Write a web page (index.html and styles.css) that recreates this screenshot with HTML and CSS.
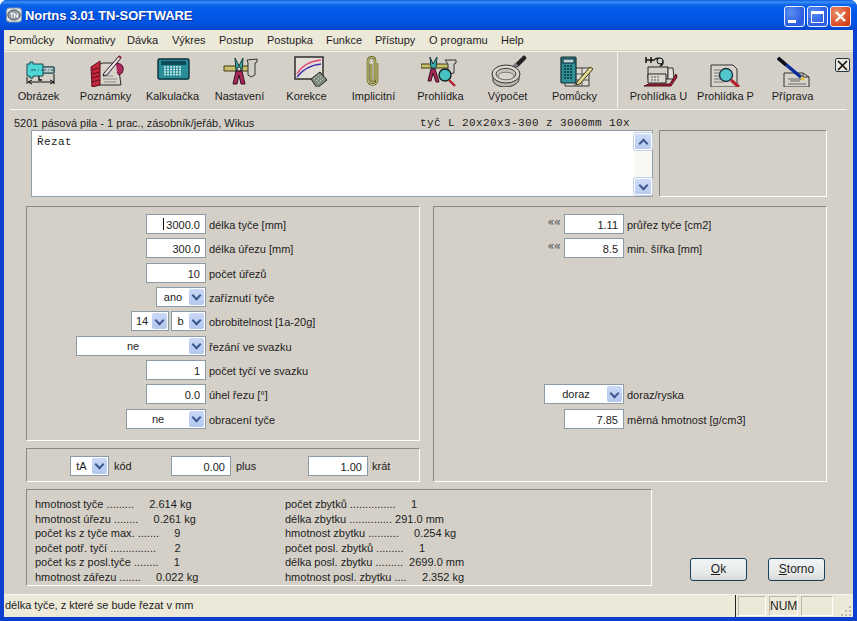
FILE: index.html
```html
<!DOCTYPE html>
<html lang="cs">
<head>
<meta charset="utf-8">
<title>Nortns 3.01 TN-SOFTWARE</title>
<link rel="stylesheet" href="styles.css">
</head>
<body>
<div class="window">
  <header class="titlebar">
    <svg class="app-icon" width="16" height="16" viewBox="0 0 16 16"><rect x="0.5" y="1" width="15" height="14" rx="3" fill="#dfe3e6" stroke="#8a9aa5"/><ellipse cx="8" cy="8" rx="6.2" ry="5" fill="#9aa3a8" stroke="#4b5358"/><path d="M4.5 6.5h3M6 6.5v4M8.5 10.5v-4l3 4v-4" fill="none" stroke="#fff" stroke-width="1"/></svg>
    <span class="title-text">Nortns 3.01 TN-SOFTWARE</span>
    <div class="win-buttons">
      <div class="win-btn"><span class="glyph-min"></span></div>
      <div class="win-btn"><span class="glyph-max"></span></div>
      <div class="win-btn win-close">
        <svg width="13" height="13" viewBox="0 0 13 13"><path d="M2 2l9 9M11 2l-9 9" stroke="#fff" stroke-width="2.4"/></svg>
      </div>
    </div>
  </header>

  <div class="client">
    <nav class="menubar">
      <span class="m1">Pomůcky</span><span class="m2">Normativy</span><span class="m3">Dávka</span><span class="m4">Výkres</span><span class="m5">Postup</span><span class="m6">Postupka</span><span class="m7">Funkce</span><span class="m8">Přístupy</span><span class="m9">O programu</span><span>Help</span>
    </nav>

    <div class="toolbar">
      <div class="tool">
        <svg width="40" height="32" viewBox="0 0 40 32"><path d="M8 9h3v-2h3v2h10v3h11v6h-11v3h-10v2h-3v-2h-3v-12z" fill="#4fd6d6" stroke="#17484f"/><path d="M24 12h11v6h-11z" fill="#b9c9c9" stroke="#17484f"/><path d="M12 15h24" stroke="#17484f" stroke-dasharray="5 2 1 2" stroke-width=".8"/><path d="M8 22v7M35 19v10M9 27h26M9 27l4-2M9 27l4 2M35 27l-4-2M35 27l-4 2" fill="none" stroke="#111"/><path d="M20 21v4h3" fill="none" stroke="#111" stroke-width="1.3"/></svg>
        <span>Obrázek</span>
      </div>
      <div class="tool">
        <svg width="40" height="32" viewBox="0 0 40 32"><path d="M9 11l8-3h15l3 22h-26z" fill="#d8d4cc" stroke="#2a2a2a"/><path d="M5 12l9-6v24l-8 2z" fill="#c2263a" stroke="#5a0c18"/><path d="M6 15l7-2M6 19l7-2M6 23l7-2M6 27l7-2" stroke="#601020"/><path d="M17 24h14M18 27h12M18 21h9" stroke="#8d8d86"/><path d="M30 9c6-2 9 4 6 9l-3 2-2-3" fill="#b02a60" stroke="#4c1029"/><path d="M18 18l15-17 2 2-14 17-4 1z" fill="#e9d5dd" stroke="#222"/><path d="M33 1l2 2" stroke="#9a1a40" stroke-width="2"/></svg>
        <span>Poznámky</span>
      </div>
      <div class="tool">
        <svg width="40" height="32" viewBox="0 0 40 32"><rect x="5" y="4" width="31" height="20" rx="1.5" fill="#2a8e98" stroke="#0e2c3a" stroke-width="1.4"/><rect x="8" y="6" width="25" height="4" fill="#0f4a58"/><path d="M11 12h2m1 0h2m1 0h2m1 0h2m1 0h2m1 0h2M11 14.5h2m1 0h2m1 0h2m1 0h2m1 0h2m1 0h2M11 17h2m1 0h2m1 0h2m1 0h2m1 0h2m1 0h2M11 19.5h2m1 0h2m1 0h2m1 0h2m1 0h2m1 0h2" stroke="#d8efef" stroke-width="1.5"/><path d="M6 24h29" stroke="#16505c"/></svg>
        <span>Kalkulačka</span>
      </div>
      <div class="tool">
        <svg width="40" height="32" viewBox="0 0 40 32"><path d="M4 11h30v5h-30z" fill="#c9c06a" stroke="#3e3a12"/><path d="M27 5l10-1v3l-2 1v12l-4 2-3-2v-12z" fill="#cfcfc8" stroke="#333"/><path d="M15 3l4 8 4-8-1 13h-6z" fill="#3eaeaa" stroke="#123c3c"/><path d="M16 16l-3 13h4l2-9 2 9h4l-3-13z" fill="#a72a5a" stroke="#3c0e20"/><circle cx="19" cy="14" r="2" fill="#ddd" stroke="#222"/></svg>
        <span>Nastavení</span>
      </div>
      <div class="tool">
        <svg width="40" height="32" viewBox="0 0 40 32"><rect x="8" y="2" width="28" height="22" fill="#e3dfd6" stroke="#222" stroke-width="1.4"/><path d="M10 19c5-9 14-13 24-14" fill="none" stroke="#e2507a" stroke-width="1.3"/><path d="M10 22c6-8 14-12 24-13" fill="none" stroke="#3a2aa8" stroke-width="1.3"/><path d="M24 24l9-7 7 8-10 8z" fill="#7e8a7a" stroke="#20261e"/><path d="M27 24l6-5M29 26l6-5M31 28l6-5" stroke="#d5dcd0" stroke-dasharray="1.5 1"/></svg>
        <span>Korekce</span>
      </div>
      <div class="tool">
        <svg width="40" height="32" viewBox="0 0 40 32"><path d="M23 8v17c0 6-9 6-9 0v-19c0-5 7-5 7 0v18c0 3-4 3-4 0v-15" fill="none" stroke="#5b5a1e" stroke-width="2.6"/><path d="M23 8v17c0 6-9 6-9 0v-19c0-5 7-5 7 0v18c0 3-4 3-4 0v-15" fill="none" stroke="#e4e08c" stroke-width="1"/></svg>
        <span>Implicitní</span>
      </div>
      <div class="tool">
        <svg width="40" height="32" viewBox="0 0 40 32"><path d="M0 9h28v4h-28z" fill="#c9c06a" stroke="#3e3a12"/><path d="M24 5h11v3l-2 1v9l-6 1v-10z" fill="#cfcfc8" stroke="#333"/><path d="M9 2l3 7 4-7-1 11h-5z" fill="#3eaeaa" stroke="#123c3c"/><path d="M10 14l-3 12h3l2-8 3 9h3l-4-13z" fill="#a72a5a" stroke="#3c0e20"/><circle cx="24" cy="20" r="6" fill="#47c0c0" stroke="#122" stroke-width="1.4"/><path d="M28 25l6 6" stroke="#b5202f" stroke-width="2.4"/></svg>
        <span>Prohlídka</span>
      </div>
      <div class="tool">
        <svg width="40" height="32" viewBox="0 0 40 32"><path d="M29 10l7-7" stroke="#222" stroke-width="4.5" stroke-linecap="round"/><path d="M26 12l3-3" stroke="#777" stroke-width="4"/><path d="M5 20v5c0 4 6 7 12 7s14-3 14-8v-5z" fill="#b9b6ae" stroke="#333"/><ellipse cx="18" cy="19" rx="14" ry="9" fill="#d9d6ce" stroke="#333"/><ellipse cx="18" cy="19" rx="10" ry="5.6" fill="#c8c4bc" stroke="#444"/><ellipse cx="18" cy="21" rx="8" ry="3.8" fill="#d8d5cd" stroke="#777"/></svg>
        <span>Výpočet</span>
      </div>
      <div class="tool">
        <svg width="40" height="32" viewBox="0 0 40 32"><path d="M10 13h24v18h-24z" fill="#dedad0" stroke="#333"/><path d="M10 19h24M10 25h24M20 13v18M27 13v18" stroke="#555"/><rect x="6" y="2" width="15" height="26" rx="1" fill="#2f9095" stroke="#0f2c30" stroke-width="1.2"/><rect x="8" y="4" width="11" height="4" fill="#b8d8d8" stroke="#123"/><path d="M9 11h2m1 0h2m1 0h2M9 14h2m1 0h2m1 0h2M9 17h2m1 0h2m1 0h2M9 20h2m1 0h2m1 0h2M9 23h2m1 0h2m1 0h2" stroke="#0d3034" stroke-width="1.7"/><path d="M22 27l13-15 3 2-13 15-4 1z" fill="#e0d98c" stroke="#3a3a20"/></svg>
        <span>Pomůcky</span>
      </div>
      <div class="tool-sep"></div>
      <div class="tool">
        <svg width="40" height="32" viewBox="0 0 40 32"><path d="M7 2v6M12 2v6M7 5h9M16 4c4-2 8 0 8 3s-3 4-3 4" fill="none" stroke="#111" stroke-width="1.5"/><circle cx="21" cy="6" r="3" fill="#ccc" stroke="#111"/><path d="M9 12h20v12h-20z" fill="#d4d0c8" stroke="#222"/><path d="M29 13h5l1 11h-6z" fill="#e4e0d8" stroke="#333"/><path d="M9 19h18v9h-18z" fill="#dcd8d0" stroke="#222"/><path d="M12 22h2m1 0h2m1 0h2M12 25h2m1 0h2m1 0h2" stroke="#555"/><path d="M5 31l5-2h21l6-10 1 3-6 9z" fill="#b52438" stroke="#4a0d18"/></svg>
        <span>Prohlídka U</span>
      </div>
      <div class="tool">
        <svg width="40" height="32" viewBox="0 0 40 32"><path d="M5 10h22l4 4v18h-26z" fill="#d8d4cb" stroke="#333"/><path d="M8 15h7M8 18h6M8 21h6M8 24h7M8 27h10" stroke="#777"/><circle cx="20" cy="20" r="6.5" fill="#52c8cc" stroke="#234" stroke-width="1.4"/><path d="M25 25l8 7" stroke="#b5202f" stroke-width="3"/></svg>
        <span>Prohlídka P</span>
      </div>
      <div class="tool">
        <svg width="40" height="32" viewBox="0 0 40 32"><path d="M11 18h19l6 4v10h-25z" fill="#d8d4cb" stroke="#333"/><path d="M30 18v4h6" fill="none" stroke="#333"/><path d="M15 24h14M17 26h10M15 29h18" stroke="#666"/><path d="M5 3l24 20" stroke="#0b2a9a" stroke-width="3.5"/><path d="M5 3l8 7" stroke="#111" stroke-width="3.5"/><path d="M28 22l3 3" stroke="#e3c43e" stroke-width="3"/></svg>
        <span>Příprava</span>
      </div>
      <div class="tool-close">
        <svg width="11" height="11" viewBox="0 0 11 11"><path d="M1 1l9 9M10 1l-9 9" stroke="#111" stroke-width="1.6"/></svg>
      </div>
    </div>

    <div class="infobar">
      <span class="info-name">5201 pásová pila - 1 prac., zásobník/jeřáb, Wikus</span>
      <span class="info-mono">tyč L 20x20x3-300 z 3000mm 10x</span>
    </div>

    <div class="memo-row">
      <div class="memo">
        <div class="memo-text">Řezat</div>
        <div class="scroll">
          <div class="scroll-btn"><span class="chev chev-up"></span></div>
          <div class="scroll-btn"><span class="chev"></span></div>
        </div>
      </div>
      <div class="frame memo-side"></div>
    </div>

    <div class="forms">
      <section class="frame panel-main">
        <div class="row"><div class="field"><div class="input"><i class="caret"></i>3000.0</div></div><label>délka tyče [mm]</label></div>
        <div class="row"><div class="field"><div class="input">300.0</div></div><label>délka úřezu [mm]</label></div>
        <div class="row"><div class="field"><div class="input">10</div></div><label>počet úřezů</label></div>
        <div class="row"><div class="field"><div class="combo w50"><span>ano</span><b></b></div></div><label>zaříznutí tyče</label></div>
        <div class="row"><div class="field"><div class="combo w38"><span>14</span><b></b></div><div class="combo w35"><span>b</span><b></b></div></div><label>obrobitelnost [1a-20g]</label></div>
        <div class="row"><div class="field"><div class="combo w130"><span>ne</span><b></b></div></div><label>řezání ve svazku</label></div>
        <div class="row"><div class="field"><div class="input">1</div></div><label>počet tyčí ve svazku</label></div>
        <div class="row"><div class="field"><div class="input">0.0</div></div><label>úhel řezu [°]</label></div>
        <div class="row"><div class="field"><div class="combo w80"><span>ne</span><b></b></div></div><label>obracení tyče</label></div>
      </section>

      <section class="frame panel-code">
        <div class="combo w39"><span>tA</span><b></b></div><label class="code-l1">kód</label>
        <div class="input code-i1">0.00</div><label class="code-l2">plus</label>
        <div class="input code-i2">1.00</div><label class="code-l3">krát</label>
      </section>

      <section class="frame panel-right">
        <div class="row"><div class="field field-r"><span class="chevrons">««</span><div class="input">1.11</div></div><label>průřez tyče [cm2]</label></div>
        <div class="row"><div class="field field-r"><span class="chevrons">««</span><div class="input">8.5</div></div><label>min. šířka [mm]</label></div>
        <div class="spacer"></div>
        <div class="row"><div class="field field-r"><div class="combo w80"><span>doraz</span><b></b></div></div><label>doraz/ryska</label></div>
        <div class="row"><div class="field field-r"><div class="input">7.85</div></div><label>měrná hmotnost [g/cm3]</label></div>
      </section>
    </div>

    <div class="bottom">
      <section class="frame results">
        <div class="res-col">hmotnost tyče .........     2.614 kg
hmotnost úřezu ........     0.261 kg
počet ks z tyče max. .......     9
počet potř. tyčí ...............      2
počet ks z posl.tyče ........     1
hmotnost zářezu .......     0.022 kg</div>
        <div class="res-col">počet zbytků ...............     1
délka zbytku .............. 291.0 mm
hmotnost zbytku ..........     0.254 kg
počet posl. zbytků .........     1
délka posl. zbytku .........  2699.0 mm
hmotnost posl. zbytku ....     2.352 kg</div>
      </section>
      <div class="actions">
        <div class="btn"><u>O</u>k</div>
        <div class="btn"><u>S</u>torno</div>
      </div>
    </div>

    <footer class="status">
      <div class="status-text">délka tyče, z které se bude řezat v mm</div>
      <div class="pane p1"></div>
      <div class="pane p2">NUM</div>
      <div class="pane p3"></div>
      <svg class="grip" width="11" height="11" viewBox="0 0 11 11"><path d="M8 1h2v2h-2zM4 5h2v2h-2zM8 5h2v2h-2zM0 9h2v2h-2zM4 9h2v2h-2zM8 9h2v2h-2z" fill="#bdb9a8"/></svg>
    </footer>
  </div>
</div>
</body>
</html>
```
FILE: styles.css
```css
* { box-sizing: border-box; }
html, body { margin: 0; padding: 0; background: #fff; }
body { width: 857px; height: 621px; overflow: hidden; font: 11px "Liberation Sans", Arial, sans-serif; color: #1c1c1c; }

.window { width: 857px; height: 621px; display: flex; flex-direction: column; background: #0a3fd0; border-radius: 7px 7px 0 0; overflow: hidden; }

.titlebar { height: 30px; flex: none; display: flex; align-items: center; padding: 0 6px; background: linear-gradient(#0a5be0 0, #3d8ff5 2px, #0b62ea 5px, #0058e8 12px, #0255e4 22px, #0648cf 29px); }
.app-icon { margin-right: 3px; }
.title-text { font: bold 13px "Liberation Sans", sans-serif; letter-spacing: -.1px; color: #fff; text-shadow: 1px 1px 0 #0f2f9c; }
.win-buttons { margin-left: auto; display: flex; gap: 2px; margin-top: 3px; }
.win-btn { width: 21px; height: 21px; border: 1px solid #e8eefc; border-radius: 3px; background: radial-gradient(circle at 30% 30%, #5a8ff0, #2a5ae0 70%, #3a6ee8); display: flex; align-items: center; justify-content: center; }
.win-close { background: radial-gradient(circle at 30% 30%, #e8906e, #d84a22 70%, #c83a18); }
.glyph-min { width: 8px; height: 3px; background: #fff; margin: 9px 5px 0 0; }
.glyph-max { width: 13px; height: 12px; border: 1px solid #fff; border-top-width: 3px; }

.client { flex: 1; margin: 0 4px 4px; background: #d4d0c8; display: flex; flex-direction: column; min-height: 0; }

.menubar { height: 20px; flex: none; background: #ece9d8; display: flex; align-items: center; padding: 0 0 1px 5px; }
.menubar span { flex: none; }
.m1 { width: 57px; } .m2 { width: 61px; } .m3 { width: 45px; } .m4 { width: 47px; } .m5 { width: 48px; } .m6 { width: 59px; } .m7 { width: 49px; } .m8 { width: 54px; } .m9 { width: 72px; }

.toolbar { height: 59px; flex: none; display: flex; padding-left: 1px; margin-top: 1px; position: relative; border-top: 1px solid #f4f2ea; }
.toolbar::after { content: ""; position: absolute; left: 6px; right: 6px; bottom: 0; height: 1px; background: #f4f4f0; }
.tool { width: 67px; flex: none; display: flex; flex-direction: column; align-items: center; padding-top: 3px; }
.tool svg { display: block; }
.tool span { margin-top: 3px; white-space: nowrap; }
.tool-sep { width: 1px; height: 56px; margin: 0 7px 0 9px; background: #f4f4f0; flex: none; }
.tool-close { position: absolute; left: 831px; top: 6px; width: 15px; height: 14px; border: 1px solid #23383f; border-radius: 2px; background: #e9e7df; display: flex; align-items: center; justify-content: center; }

.infobar { height: 20px; flex: none; display: flex; align-items: flex-end; padding: 0 0 0 10px; }
.info-name { width: 406px; flex: none; line-height: 13px; }
.info-mono { font: 11px "Liberation Mono", monospace; line-height: 13px; letter-spacing: .4px; }

.memo-row { display: flex; flex: none; gap: 6px; height: 67px; margin-left: 27px; }
.memo { width: 622px; display: flex; justify-content: space-between; background: #fff; border: 1px solid #8fa0ac; }
.memo-text { font: 11px "Liberation Mono", monospace; letter-spacing: .4px; padding: 5px 0 0 5px; }
.scroll { width: 18px; padding: 2px 0 1px; display: flex; flex-direction: column; justify-content: space-between; background: #f8f8f4; }
.scroll-btn { height: 17px; border-radius: 2px; border: 1px solid #fff; background: linear-gradient(#cddcf6, #b8caee); box-shadow: 0 0 0 1px #c4d0e6; display: flex; align-items: center; justify-content: center; }
.chev { width: 7px; height: 7px; border-right: 2px solid #3d5890; border-bottom: 2px solid #3d5890; transform: translateY(-1px) rotate(45deg); }
.chev-up { transform: translateY(2px) rotate(225deg); }

.frame { border: 1px solid; border-color: #8a877f #fff #fff #8a877f; }
.memo-side { width: 168px; }

.forms { flex: none; display: grid; grid-template-columns: 394px 394px; grid-template-rows: 235px 34px; gap: 7px 13px; margin: 9px 0 0 22px; }

.panel-main, .panel-right { display: grid; grid-auto-rows: 20px; row-gap: 4.33px; padding-top: 7px; align-content: start; }
.panel-right { grid-column: 2; grid-row: 1 / span 2; }
.panel-code { grid-column: 1; grid-row: 2; display: flex; align-items: center; padding: 1px 0 0 43px; }
.panel-code label { padding-top: 1px; }

.row { display: flex; align-items: center; gap: 3px; }
.row label { white-space: nowrap; padding-top: 2px; }
.field { width: 179px; flex: none; display: flex; justify-content: flex-end; gap: 2px; align-items: center; }
.field-r { width: 190px; gap: 4px; }
.chevrons { font: 12px "DejaVu Sans", sans-serif; color: #555; margin-top: -5px; letter-spacing: -1px; }
.spacer { grid-row: span 5; }

.input { width: 60px; height: 20px; flex: none; background: #fff; border: 1px solid #8b9ca8; text-align: right; padding: 0 5px; line-height: 20px; white-space: nowrap; }
.caret { display: inline-block; width: 1px; height: 12px; background: #111; margin-right: 2px; vertical-align: -1px; }

.combo { height: 20px; flex: none; display: flex; align-items: center; background: #fff; border: 1px solid #8b9ca8; padding-right: 1px; }
.combo span { flex: 1; text-align: center; }
.combo b { width: 15px; height: 16px; flex: none; border-radius: 2px; background: linear-gradient(#c9d8f5, #b4c8ee); display: flex; align-items: center; justify-content: center; }
.combo b::after { content: ""; width: 5px; height: 5px; border-right: 2px solid #3d5890; border-bottom: 2px solid #3d5890; transform: translateY(-1px) rotate(45deg); }
.w50 { width: 50px; } .w38 { width: 38px; } .w35 { width: 35px; } .w130 { width: 130px; } .w80 { width: 80px; } .w39 { width: 39px; }

.code-l1 { margin-left: 5px; width: 57px; }
.code-l2 { margin-left: 5px; width: 72px; }
.code-l3 { margin-left: 4px; }

.bottom { flex: none; display: flex; margin: 7px 0 0 22px; height: 105px; }
.results { width: 626px; height: 97px; display: flex; padding: 7px 0 0 8px; }
.res-col { width: 250px; white-space: pre; line-height: 14.6px; }
.actions { display: flex; align-items: flex-start; gap: 21px; padding: 69px 0 0 38px; }
.btn { width: 57px; height: 23px; border: 1px solid #16405c; border-radius: 3px; background: linear-gradient(#f2f5f6, #e6e8e8 70%, #d6d8d8); text-align: center; line-height: 21px; font-size: 12px; }

.status { flex: 1; display: flex; align-items: stretch; background: #ece9d8; border-top: 1px solid #f4f2ea; position: relative; min-height: 0; }
.status-text { width: 732px; flex: none; padding: 4px 0 0 1px; border-right: 1px solid #222; }
.pane { margin-top: 1px; height: 20px; border: 1px solid; border-color: #bdb9a8 #fff #fff #bdb9a8; text-align: center; line-height: 18px; font-size: 12px; }
.p1 { width: 28px; margin-left: 2px; } .p2 { width: 29px; margin-left: 3px; } .p3 { width: 32px; margin-left: 3px; }
.grip { position: absolute; right: 1px; bottom: 1px; }
```
